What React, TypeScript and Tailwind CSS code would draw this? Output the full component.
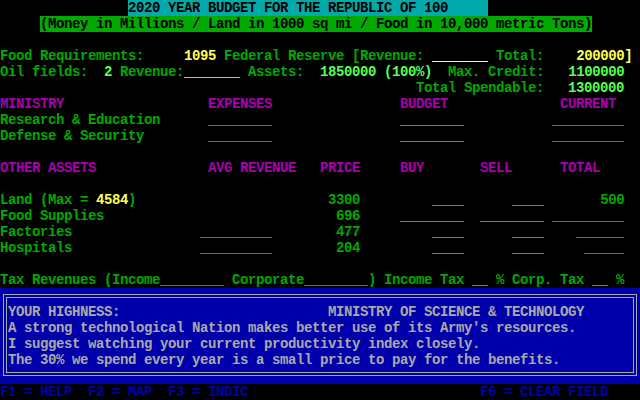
const sp = (n: number) => " ".repeat(n);

const TEXT: Record<string, string> = {
  g: "text-[#00aa00]",
  G: "text-[#55ff55]",
  y: "text-[#ffff55]",
  m: "text-[#aa00aa]",
  k: "text-black",
};

const WIDTH: Record<number, string> = {
  2: "w-[16px]",
  4: "w-[32px]",
  5: "w-[40px]",
  6: "w-[48px]",
  7: "w-[56px]",
  8: "w-[64px]",
  9: "w-[72px]",
};

const LINE: Record<string, string> = {
  g: "border-[#00aa00]",
  G: "border-[#55ff55]",
  y: "border-[#ffff55]",
  c: "border-[#00aaaa]",
};

function T({ c = "g", children }: { c?: string; children: React.ReactNode }) {
  return <span className={`whitespace-pre shrink-0 ${TEXT[c]}`}>{children}</span>;
}

// an empty input field: underscore line at the bottom of the cell
function B({ n, c = "g" }: { n: number; c?: string }) {
  return <span className={`inline-block h-[14px] shrink-0 border-b ${WIDTH[n]} ${LINE[c]}`} />;
}

function Row({ children }: { children?: React.ReactNode }) {
  return <div className="flex h-4 items-start leading-4">{children}</div>;
}

export default function App() {
  return (
    <div
      className="w-[640px] h-[400px] overflow-hidden bg-black text-[14px] font-bold tracking-[-0.4px]"
      style={{ fontFamily: '"Liberation Mono", monospace' }}
    >
      {/* header */}
      <Row>
        <T>{sp(16)}</T>
        <span className="whitespace-pre bg-[#00aaaa] text-black">
          {"2020 YEAR BUDGET FOR THE REPUBLIC OF 100" + sp(5)}
        </span>
      </Row>
      <Row>
        <T>{sp(5)}</T>
        <span className="whitespace-pre bg-[#00aa00] text-black">
          (Money in Millions / Land in 1000 sq mi / Food in 10,000 metric Tons)
        </span>
      </Row>
      <Row />

      {/* reserves */}
      <Row>
        <T>{"Food Requirements:" + sp(5)}</T>
        <T c="y">1095</T>
        <T>{" Federal Reserve [Revenue: "}</T>
        <B n={7} c="y" />
        <T>{" Total:" + sp(4)}</T>
        <T c="y">200000]</T>
      </Row>
      <Row>
        <T>{"Oil fields:  "}</T>
        <T c="G">2</T>
        <T>{" Revenue:"}</T>
        <B n={7} c="G" />
        <T>{" Assets:  "}</T>
        <T c="G">1850000 (100%)</T>
        <T>{"  Max. Credit:   "}</T>
        <T c="G">1100000</T>
      </Row>
      <Row>
        <T>{sp(52) + "Total Spendable:   "}</T>
        <T c="G">1300000</T>
      </Row>

      {/* ministries */}
      <Row>
        <T c="m">{"MINISTRY" + sp(18) + "EXPENSES" + sp(16) + "BUDGET" + sp(14) + "CURRENT"}</T>
      </Row>
      <Row>
        <T>{"Research & Education" + sp(6)}</T>
        <B n={8} />
        <T>{sp(16)}</T>
        <B n={8} c="c" />
        <T>{sp(11)}</T>
        <B n={9} />
      </Row>
      <Row>
        <T>{"Defense & Security" + sp(8)}</T>
        <B n={8} />
        <T>{sp(16)}</T>
        <B n={8} c="c" />
        <T>{sp(11)}</T>
        <B n={9} />
      </Row>
      <Row />

      {/* other assets */}
      <Row>
        <T c="m">
          {"OTHER ASSETS" + sp(14) + "AVG REVENUE" + sp(3) + "PRICE" + sp(5) + "BUY" + sp(7) + "SELL" + sp(6) + "TOTAL"}
        </T>
      </Row>
      <Row />
      <Row>
        <T>{"Land (Max = "}</T>
        <T c="y">4584</T>
        <T>{")" + sp(24) + "3300" + sp(9)}</T>
        <B n={4} c="c" />
        <T>{sp(6)}</T>
        <B n={4} c="c" />
        <T>{sp(7) + "500"}</T>
      </Row>
      <Row>
        <T>{"Food Supplies" + sp(29) + "696" + sp(5)}</T>
        <B n={8} c="c" />
        <T>{sp(2)}</T>
        <B n={8} c="c" />
        <T>{sp(1)}</T>
        <B n={9} />
      </Row>
      <Row>
        <T>{"Factories" + sp(16)}</T>
        <B n={9} />
        <T>{sp(8) + "477" + sp(9)}</T>
        <B n={4} c="c" />
        <T>{sp(6)}</T>
        <B n={4} c="c" />
        <T>{sp(4)}</T>
        <B n={6} />
      </Row>
      <Row>
        <T>{"Hospitals" + sp(16)}</T>
        <B n={9} />
        <T>{sp(8) + "204" + sp(9)}</T>
        <B n={4} c="c" />
        <T>{sp(6)}</T>
        <B n={4} c="c" />
        <T>{sp(5)}</T>
        <B n={5} />
      </Row>
      <Row />

      {/* taxes */}
      <Row>
        <T>Tax Revenues (Income</T>
        <B n={8} />
        <T>{" Corporate"}</T>
        <B n={8} />
        <T>{") Income Tax "}</T>
        <B n={2} c="c" />
        <T>{" % Corp. Tax "}</T>
        <B n={2} c="c" />
        <T>{" %"}</T>
      </Row>

      {/* advisor message */}
      <div className="h-[96px] bg-[#0000aa] pt-[6px] pb-[8px] px-[3px]">
        <div className="h-full border border-[#aaaaaa] p-[2px]">
          <div className="h-full border border-[#aaaaaa] pt-[6px] pl-[1px] text-[#aaaaaa]">
            <div className="h-4 leading-4 whitespace-pre">
              {"YOUR HIGHNESS:" + sp(26) + "MINISTRY OF SCIENCE & TECHNOLOGY"}
            </div>
            <div className="h-4 leading-4 whitespace-pre">
              A strong technological Nation makes better use of its Army's resources.
            </div>
            <div className="h-4 leading-4 whitespace-pre">
              I suggest watching your current productivity index closely.
            </div>
            <div className="h-4 leading-4 whitespace-pre">
              The 30% we spend every year is a small price to pay for the benefits.
            </div>
          </div>
        </div>
      </div>

      {/* function keys */}
      <Row>
        <span className="whitespace-pre text-[#0000aa]">
          {"F1 = HELP  F2 = MAP  F3 = INDIC" + sp(29) + "F6 = CLEAR FIELD"}
        </span>
      </Row>
    </div>
  );
}
